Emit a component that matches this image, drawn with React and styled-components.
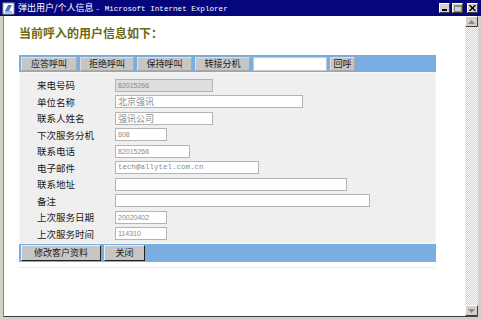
import React from 'react';
import styled, { createGlobalStyle } from 'styled-components';

const cjk = '"Noto Sans CJK SC", "Liberation Sans", sans-serif';

const Global = createGlobalStyle`
  html, body { margin: 0; padding: 0; background: #ffffff; overflow: hidden; }
  body { width: 481px; height: 320px; }
`;

const Window = styled.div`
  width: 481px;
  height: 320px;
  box-sizing: border-box;
  display: flex;
  flex-direction: column;
  background: #d4d0c8;
`;

const TitleBar = styled.div`
  height: 16px;
  flex: none;
  display: flex;
  align-items: center;
  padding: 0 3px 0 2px;
  background: #06067c;
  color: #ffffff;
  gap: 3px;
`;

const TitleText = styled.div`
  flex: 1;
  font-family: ${cjk};
  font-size: 9px;
  line-height: 14px;
  white-space: nowrap;
  span { font-family: "Liberation Mono", monospace; font-size: 7.6px; }
`;

const Caption = styled.div`
  display: flex;
  gap: 2px;
  & > div:last-child { margin-left: 2px; }
`;

const CapButton = styled.div`
  width: 11px;
  height: 10px;
  box-sizing: border-box;
  background: #d4d0c8;
  border: 1px solid;
  border-color: #ffffff #404040 #404040 #ffffff;
  display: flex;
  align-items: center;
  justify-content: center;
`;

const Frame = styled.div`
  flex: 1;
  display: flex;
  border-left: 3px solid #d4d0c8;
  border-right: 3px solid #d4d0c8;
  border-bottom: 3px solid #d4d0c8;
  min-height: 0;
`;

const Page = styled.div`
  flex: 1;
  background: #ffffff;
  border-left: 1px solid #808080;
  border-bottom: 1px solid #404040;
  padding: 9px 0 0 15px;
  display: flex;
  flex-direction: column;
`;

const Heading = styled.h1`
  margin: 0;
  font-family: ${cjk};
  font-size: 12px;
  line-height: 16px;
  font-weight: 700;
  color: #6b6914;
`;

const Card = styled.div`
  width: 417px;
  margin-top: 14px;
  display: flex;
  flex-direction: column;
  border-bottom: 1px dotted #dcdcdc;
  padding-bottom: 5px;
`;

const Bar = styled.div`
  height: ${p => p.$h}px;
  box-sizing: border-box;
  background: #7aaee0;
  display: flex;
  align-items: center;
  padding-left: 2px;
  gap: 3px;
`;

const BarButton = styled.div`
  width: ${p => p.$w}px;
  height: ${p => (p.$raised ? 16 : 14)}px;
  box-sizing: border-box;
  background: #c6c6c6;
  border: 1px solid;
  border-color: ${p => (p.$raised ? '#f0f0f0 #202020 #202020 #f0f0f0' : '#dedede #a8a8a8 #a8a8a8 #dedede')};
  font-family: ${cjk};
  font-size: 9px;
  line-height: 12px;
  color: #202020;
  display: flex;
  align-items: center;
  justify-content: center;
`;

const BarInput = styled.div`
  width: 74px;
  height: 14px;
  box-sizing: border-box;
  background: #ffffff;
  border: 1px solid #c8c8c8;
`;

const Panel = styled.div`
  background: #efefef;
  border: 1px solid #f6f6f6;
  padding: 4px 0 1px 17px;
  display: flex;
  flex-direction: column;
`;

const Row = styled.div`
  height: 16.5px;
  display: flex;
  align-items: center;
`;

const Label = styled.div`
  width: 78px;
  font-family: ${cjk};
  font-size: 9.5px;
  line-height: 12px;
  color: #1a1a1a;
  white-space: nowrap;
`;

const Field = styled.div`
  width: ${p => p.$w}px;
  height: 13px;
  box-sizing: border-box;
  border: 1px solid #b4b4b4;
  background: ${p => (p.$disabled ? '#dedede' : '#ffffff')};
  padding-left: 2px;
  color: #8a8a8a;
  font-family: ${p => (p.$mono ? '"Liberation Mono", monospace' : p.$cjk ? cjk : '"Liberation Sans", sans-serif')};
  font-size: ${p => (p.$mono ? 7.5 : p.$cjk ? 9 : 7)}px;
  line-height: 11px;
  white-space: nowrap;
  overflow: hidden;
`;

const ScrollBar = styled.div`
  width: 13px;
  flex: none;
  display: flex;
  flex-direction: column;
  justify-content: space-between;
  background: repeating-conic-gradient(#ffffff 0 25%, #d4d0c8 0 50%) 0 0 / 2px 2px;
  border-bottom: 1px solid #404040;
`;

const Arrow = styled.div`
  height: 11px;
  box-sizing: border-box;
  background: #d4d0c8;
  border: 1px solid;
  border-color: #ffffff #404040 #404040 #ffffff;
  display: flex;
  align-items: center;
  justify-content: center;
`;

const fields = [
  { label: '来电号码', value: '82015266', w: 98, disabled: true },
  { label: '单位名称', value: '北京强讯', w: 188, cjk: true },
  { label: '联系人姓名', value: '强讯公司', w: 98, cjk: true },
  { label: '下次服务分机', value: '608', w: 52 },
  { label: '联系电话', value: '82015266', w: 75 },
  { label: '电子邮件', value: 'tech@allytel.com.cn', w: 144, mono: true },
  { label: '联系地址', value: '', w: 232 },
  { label: '备注', value: '', w: 255 },
  { label: '上次服务日期', value: '20020402', w: 52 },
  { label: '上次服务时间', value: '114310', w: 52 },
];

function IeIcon() {
  return (
    <svg width="13" height="13" viewBox="0 0 13 13">
      <rect x="1" y="1" width="11" height="11" fill="#ffffff" stroke="#9a9a9a" />
      <path d="M3 9 L6 3 L10 3 L7 9 Z" fill="#3a6fd0" />
      <path d="M3 10 H10" stroke="#3a6fd0" />
    </svg>
  );
}

export default function App() {
  return (
    <>
      <Global />
      <Window>
        <TitleBar>
          <IeIcon />
          <TitleText>弹出用户/个人信息 <span>- Microsoft Internet Explorer</span></TitleText>
          <Caption>
            <CapButton>
              <svg width="7" height="6" viewBox="0 0 7 6"><rect x="1" y="4" width="5" height="2" fill="#000" /></svg>
            </CapButton>
            <CapButton>
              <svg width="8" height="7" viewBox="0 0 8 7"><rect x="0.5" y="0.5" width="7" height="6" fill="none" stroke="#8a8a8a" /><rect x="0.5" y="0.5" width="7" height="1.5" fill="#8a8a8a" /></svg>
            </CapButton>
            <CapButton>
              <svg width="7" height="6" viewBox="0 0 7 6"><path d="M0.5 0 L6.5 6 M6.5 0 L0.5 6" stroke="#000" strokeWidth="1.4" /></svg>
            </CapButton>
          </Caption>
        </TitleBar>
        <Frame>
          <Page>
            <Heading>当前呼入的用户信息如下：</Heading>
            <Card>
              <Bar $h={17}>
                <BarButton $w={56}>应答呼叫</BarButton>
                <BarButton $w={54}>拒绝呼叫</BarButton>
                <BarButton $w={55}>保持呼叫</BarButton>
                <BarButton $w={55}>转接分机</BarButton>
                <BarInput />
                <BarButton $w={25}>回呼</BarButton>
              </Bar>
              <Panel>
                {fields.map(f => (
                  <Row key={f.label}>
                    <Label>{f.label}</Label>
                    <Field $w={f.w} $disabled={f.disabled} $mono={f.mono} $cjk={f.cjk}>{f.value}</Field>
                  </Row>
                ))}
              </Panel>
              <Bar $h={18}>
                <BarButton $w={80} $raised>修改客户资料</BarButton>
                <BarButton $w={41} $raised>关闭</BarButton>
              </Bar>
            </Card>
          </Page>
          <ScrollBar>
            <Arrow>
              <svg width="7" height="4" viewBox="0 0 7 4"><path d="M0 4 L3.5 0 L7 4 Z" fill="#8a8a8a" /></svg>
            </Arrow>
            <Arrow>
              <svg width="7" height="4" viewBox="0 0 7 4"><path d="M0 0 L3.5 4 L7 0 Z" fill="#8a8a8a" /></svg>
            </Arrow>
          </ScrollBar>
        </Frame>
      </Window>
    </>
  );
}
